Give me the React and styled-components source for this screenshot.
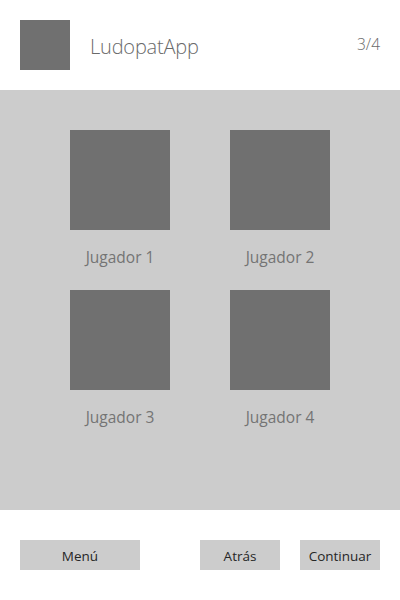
import React from 'react'
import styled, { createGlobalStyle } from 'styled-components'

const GlobalStyle = createGlobalStyle`
  body {
    margin: 0;
    background: #ffffff;
    font-family: 'Segoe UI', 'Open Sans', 'Noto Sans', sans-serif;
  }
`

const Screen = styled.div`
  width: 400px;
  height: 600px;
  display: flex;
  flex-direction: column;
`

const Header = styled.header`
  height: 90px;
  display: flex;
  align-items: center;
  padding: 0 20px;
  box-sizing: border-box;
`

const Logo = styled.div`
  width: 50px;
  height: 50px;
  background: #707070;
`

const Title = styled.h1`
  margin: 3px 0 0 20px;
  flex: 1;
  font-size: 20px;
  font-weight: 300;
  letter-spacing: -0.2px;
  color: #6a6a6a;
`

const Step = styled.span`
  margin-top: -2px;
  font-size: 15.5px;
  font-weight: 300;
  color: #6a6a6a;
`

const Board = styled.main`
  height: 420px;
  background: #cccccc;
  display: grid;
  grid-template-columns: repeat(2, 100px);
  grid-auto-rows: 160px;
  column-gap: 60px;
  justify-content: center;
  padding-top: 40px;
  box-sizing: border-box;
`

const Player = styled.div`
  display: flex;
  flex-direction: column;
  align-items: center;
`

const Avatar = styled.div`
  width: 100px;
  height: 100px;
  background: #707070;
`

const PlayerName = styled.span`
  margin-top: 16px;
  font-size: 15.5px;
  color: #747474;
  white-space: nowrap;
`

const Footer = styled.footer`
  flex: 1;
  display: flex;
  align-items: center;
  padding: 0 20px;
  gap: 20px;
`

const Button = styled.button`
  width: ${props => props.w}px;
  height: 30px;
  border: none;
  background: #cccccc;
  color: #262626;
  font-family: inherit;
  font-size: 13.5px;
  padding: 0 0 0 0;
  line-height: 32px;
  margin-left: ${props => (props.push ? 'auto' : '0')};
`

const players = ['Jugador 1', 'Jugador 2', 'Jugador 3', 'Jugador 4']

const App = () => {
  return (
    <>
      <GlobalStyle />
      <Screen>
        <Header>
          <Logo />
          <Title>LudopatApp</Title>
          <Step>3/4</Step>
        </Header>
        <Board>
          {players.map(name => (
            <Player key={name}>
              <Avatar />
              <PlayerName>{name}</PlayerName>
            </Player>
          ))}
        </Board>
        <Footer>
          <Button w={120}>Menú</Button>
          <Button w={80} push>Atrás</Button>
          <Button w={80}>Continuar</Button>
        </Footer>
      </Screen>
    </>
  )
}

export default App
